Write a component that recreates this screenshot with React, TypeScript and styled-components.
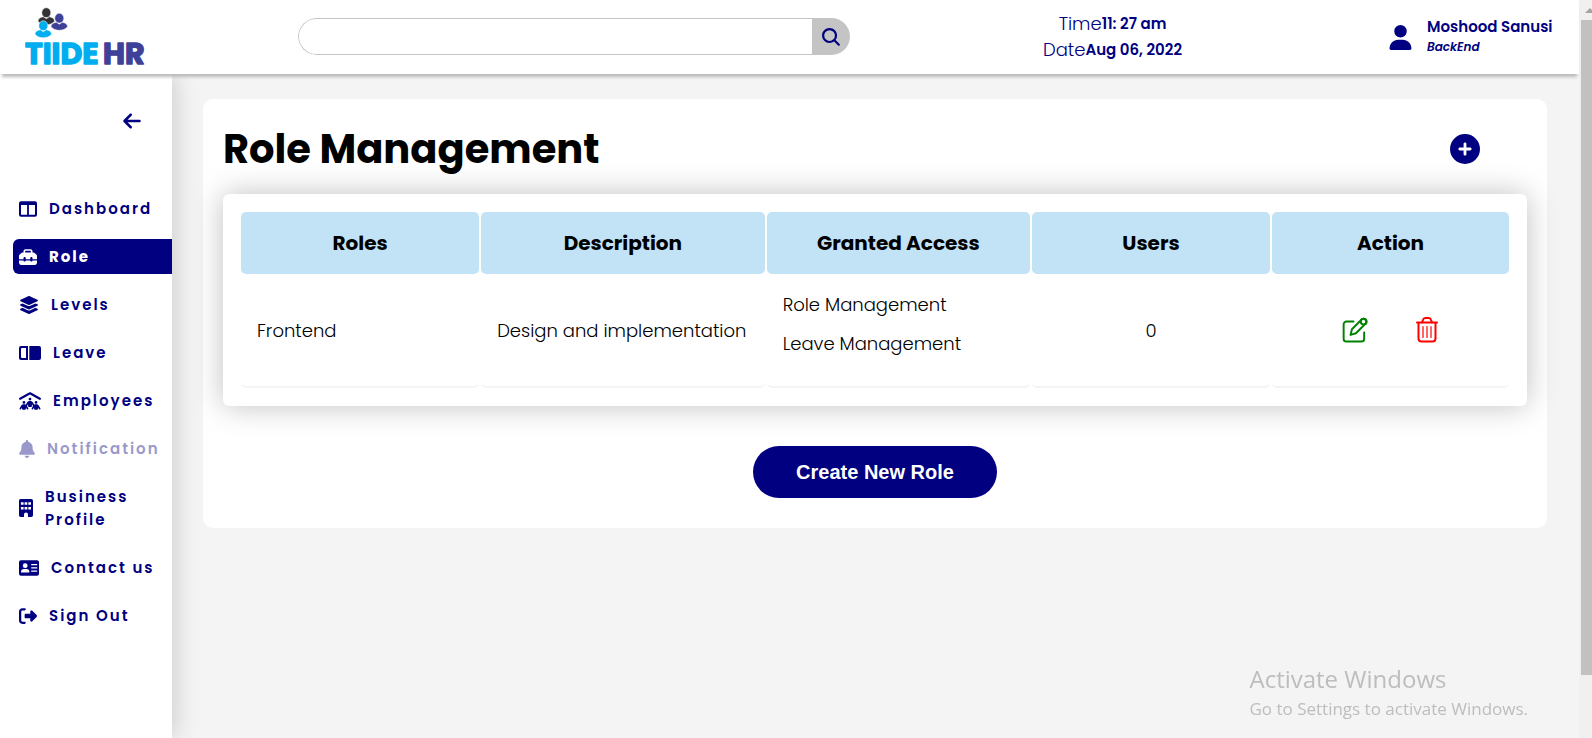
import React from "react";
import styled, { createGlobalStyle } from "styled-components";
import {
  FaArrowLeft,
  FaBell,
  FaCirclePlus,
  FaLayerGroup,
  FaPeopleRoof,
  FaRightFromBracket,
  FaToolbox,
  FaUser,
} from "react-icons/fa6";
import { IoSearch } from "react-icons/io5";

const navy = "#000080";
const brandBlue = "#00aeef";
const brandIndigo = "#3f4199";

const GlobalStyle = createGlobalStyle`
  *, *::before, *::after { box-sizing: border-box; }
  body {
    margin: 0;
    background: #f4f4f4;
    color: #000;
    font-family: Poppins, Inter, "Liberation Sans", sans-serif;
  }
  h1, p, ul { margin: 0; padding: 0; }
  ul { list-style: none; }
  button { border: 0; padding: 0; background: none; cursor: pointer; }
`;

const Shell = styled.div`
  display: grid;
  grid-template-columns: minmax(0, 1fr) 13px;
  min-height: 100vh;
`;

const Page = styled.div`
  display: flex;
  flex-direction: column;
  min-width: 0;
`;

const Header = styled.header`
  position: relative;
  z-index: 2;
  display: flex;
  align-items: center;
  height: 74px;
  padding: 0 0 1px 25px;
  background: #fff;
  box-shadow: 0 5px 3px -2px #bbb;
  color: ${navy};
`;

const Logo = styled.a`
  flex: 0 0 273px;
  line-height: 0;
`;

const LogoArt = styled.svg`
  width: 124px;
  height: 73px;
  font-size: 30px;
  font-weight: 700;
`;

const SearchForm = styled.form`
  display: flex;
  flex: 0 1 552px;
  height: 37px;
  border-radius: 19px;
  overflow: hidden;
`;

const SearchInput = styled.input`
  flex: 1;
  min-width: 0;
  padding: 0 16px;
  border: 1px solid #c4c4c4;
  border-right: 0;
  border-radius: 19px 0 0 19px;
  outline: 0;
  font: inherit;
`;

const SearchButton = styled.button`
  display: flex;
  align-items: center;
  justify-content: center;
  width: 38px;
  background: #c4c4c4;
  color: ${navy};
`;

const Clock = styled.div`
  flex: 1;
  text-align: center;
  font-size: 18px;
  font-weight: 300;
  line-height: 26px;

  strong {
    font-size: 15px;
    font-weight: 600;
    vertical-align: 1px;
  }
`;

const Account = styled.div`
  display: flex;
  align-items: center;
  gap: 14px;
  flex: 0 0 204px;
  padding: 1px 0 0 13px;
`;

const AccountName = styled.p`
  font-size: 15px;
  font-weight: 600;
  line-height: 20px;
`;

const AccountTeam = styled.p`
  font-size: 12px;
  font-style: italic;
  font-weight: 600;
  line-height: 20px;
`;

const Body = styled.div`
  display: flex;
  flex: 1;
`;

const Sidebar = styled.aside`
  position: relative;
  flex: 0 0 172px;
  padding-left: 13px;
  background: #fff;
  box-shadow: 0 0 26px rgba(0, 0, 0, 0.2);
`;

const CollapseButton = styled.button`
  display: block;
  height: 20px;
  margin: 37px 30px 60px auto;
  color: ${navy};
  line-height: 0;
`;

const NavList = styled.ul`
  display: flex;
  flex-direction: column;
  gap: 13px;
`;

const NavLink = styled.a<{ $iconWidth: number; $active?: boolean; $muted?: boolean }>`
  display: flex;
  align-items: center;
  gap: 12px;
  padding: 6px 0 6px 6px;
  border-radius: 6px 0 0 6px;
  background: ${(p) => (p.$active ? navy : "transparent")};
  color: ${(p) => (p.$active ? "#fff" : navy)};
  opacity: ${(p) => (p.$muted ? 0.4 : 1)};
  font-size: 15px;
  font-weight: ${(p) => (p.$active ? 700 : 600)};
  letter-spacing: 2px;
  line-height: 23px;
  text-decoration: none;

  svg {
    flex: none;
    width: ${(p) => p.$iconWidth}px;
    height: 18px;
  }
`;

const Main = styled.main`
  flex: 1;
  min-width: 0;
  padding: 25px 32px 25px 31px;
`;

const Panel = styled.section`
  display: flex;
  flex-direction: column;
  padding: 20px 20px 30px;
  border-radius: 10px;
  background: #fff;
`;

const TitleRow = styled.div`
  display: flex;
  align-items: center;
  justify-content: space-between;
  padding-right: 47px;
  margin-bottom: 15px;
`;

const Title = styled.h1`
  font-size: 40px;
  font-weight: 700;
  line-height: 60px;
`;

const IconButton = styled.button<{ $color: string; $size: number }>`
  color: ${(p) => p.$color};
  font-size: ${(p) => p.$size}px;
  line-height: 0;
`;

const TableCard = styled.div`
  padding: 16px;
  border-radius: 6px;
  background: #fff;
  box-shadow: 0 0 30px rgba(0, 0, 0, 0.25);
`;

const RoleTable = styled.table`
  width: 100%;
  border-spacing: 2px;
  table-layout: fixed;
`;

const HeadCell = styled.th<{ $width: string }>`
  width: ${(p) => p.$width};
  height: 62px;
  padding: 0 16px;
  border-radius: 5px;
  background: #c2e2f5;
  font-size: 20px;
  font-weight: 700;
`;

const Cell = styled.td<{ $center?: boolean }>`
  padding: 15px 16px 17px;
  border-bottom: 2px solid #f4f4f4;
  border-radius: 5px;
  font-size: 18px;
  font-weight: 300;
  line-height: 27px;
  text-align: ${(p) => (p.$center ? "center" : "left")};
`;

const AccessItem = styled.li`
  margin-bottom: 12px;
`;

const Actions = styled.div`
  display: flex;
  justify-content: center;
  gap: 46px;
`;

const CreateButton = styled.button`
  align-self: center;
  height: 52px;
  margin-top: 40px;
  padding: 0 43px;
  border-radius: 26px;
  background: ${navy};
  color: #fff;
  font-family: Arial, "Liberation Sans", sans-serif;
  font-size: 20px;
  font-weight: 700;
`;

const Watermark = styled.div`
  position: fixed;
  right: 64px;
  bottom: 15px;
  color: #bdbdbd;
  font-family: "Segoe UI", "Open Sans", sans-serif;
  font-size: 17px;
  line-height: 28px;
  pointer-events: none;
`;

const WatermarkTitle = styled.p`
  font-size: 24px;
  line-height: 32px;
`;

const ScrollTrack = styled.div`
  display: flex;
  flex-direction: column;
  height: 100vh;
  padding-left: 2px;
  background: #f0f0f0;
  overflow: hidden;
`;

const ScrollArrow = styled.svg`
  flex: none;
  width: 15px;
  height: 20px;
`;

const ScrollThumb = styled.div`
  height: 88.8%;
  background: #c1c1c1;
`;

function DashboardIcon() {
  return (
    <svg viewBox="0 0 18 18" fill="currentColor" aria-hidden="true">
      <path
        fillRule="evenodd"
        d="M2 1.300h14a2 2 0 0 1 2 2v11.400a2 2 0 0 1-2 2H2a2 2 0 0 1-2-2V3.300a2 2 0 0 1 2-2ZM2 5v9.200a.6.6 0 0 0 .6.6H8.100V5Zm7.900 0v9.800h5.500a.6.6 0 0 0 .6-.6V5Z"
      />
    </svg>
  );
}

function LeaveIcon() {
  return (
    <svg viewBox="0 0 22 18" fill="currentColor" aria-hidden="true">
      <path
        fillRule="evenodd"
        d="M2 2h7v14H2a2 2 0 0 1-2-2V4a2 2 0 0 1 2-2Zm1 2a1 1 0 0 0-1 1v8a1 1 0 0 0 1 1h4V4Z"
      />
      <path d="M10.300 2H20a2 2 0 0 1 2 2v10a2 2 0 0 1-2 2h-9.700Z" />
    </svg>
  );
}

function BuildingIcon() {
  return (
    <svg viewBox="0 0 14 18" fill="currentColor" aria-hidden="true">
      <path
        fillRule="evenodd"
        d="M1.700 0h10.600A1.700 1.700 0 0 1 14 1.700v14.600a1.700 1.700 0 0 1-1.700 1.700H9v-2.600a2 2 0 0 0-4 0V18H1.700A1.700 1.700 0 0 1 0 16.300V1.700A1.700 1.700 0 0 1 1.700 0ZM1.900 3.200v2.600h2.700V3.200Zm3.700 0v2.600h2.700V3.200Zm3.700 0v2.600h2.700V3.200ZM1.900 7.900v2.600h2.700V7.900Zm3.700 0v2.600h2.700V7.900Zm3.700 0v2.600h2.700V7.900Z"
      />
    </svg>
  );
}

function ContactIcon() {
  return (
    <svg viewBox="0 0 20 18" fill="currentColor" aria-hidden="true">
      <path
        fillRule="evenodd"
        d="M2 1.200h16a2 2 0 0 1 2 2v11.600a2 2 0 0 1-2 2H2a2 2 0 0 1-2-2V3.200a2 2 0 0 1 2-2ZM6.200 4.300a2.400 2.400 0 1 0 0 4.800 2.400 2.400 0 0 0 0-4.800ZM5 10a3 3 0 0 0-3 3c0 .4.200.6.600.600h7.200c.4 0 .6-.2.600-.6a3 3 0 0 0-3-3Zm7.200-4.900v1.200h6V5.100Zm0 3.200v1.200h6V8.300Zm0 3.200v1.200h6v-1.200Z"
      />
    </svg>
  );
}

function EditIcon() {
  return (
    <svg
      viewBox="0 0 26 27"
      width="1em"
      height="1em"
      fill="none"
      stroke="currentColor"
      strokeWidth="2"
      strokeLinecap="round"
      strokeLinejoin="round"
      aria-hidden="true"
    >
      <path d="M11.500 4.700H4.200a3 3 0 0 0-3 3V22.500a3 3 0 0 0 3 3h15.300a3 3 0 0 0 3-3V16" />
      <path d="M8.400 18.600 9.800 12.700 19.900 2.600A3 3 0 0 1 24.100 6.800L14 16.900Z" />
      <circle cx="22" cy="4.700" r="3" />
    </svg>
  );
}

function TrashIcon() {
  return (
    <svg
      viewBox="0 0 26 26"
      width="1em"
      height="1em"
      fill="none"
      stroke="currentColor"
      strokeWidth="2"
      strokeLinecap="round"
      strokeLinejoin="round"
      aria-hidden="true"
    >
      <path d="M3 5.500h20M4.500 5.500V21.500a3 3 0 0 0 3 3h11a3 3 0 0 0 3-3V5.500" />
      <path d="M8 5.500 9 2.800A2.500 2.500 0 0 1 11.300 1h3.400A2.500 2.500 0 0 1 17 2.800l1 2.700" />
      <path strokeWidth="1.200" d="M9 9.500v11M13 9.500v11M17 9.500v11" />
    </svg>
  );
}

function Person({ x, y, color }: { x: number; y: number; color: string }) {
  return (
    <g transform={`translate(${x} ${y})`} fill={color} stroke="#fff" strokeWidth="0.5">
      <path d="M0 13.200C0 10.400 3 9.200 5.400 8.800l2.900 1.900 2.900-1.900c2.400.4 5.400 1.600 5.400 4.400-2 2.400-5 3.600-8.300 3.600S2 15.600 0 13.200Z" />
      <ellipse cx="8.300" cy="4.700" rx="4.500" ry="4.900" />
    </g>
  );
}

const navItems = [
  { label: "Dashboard", icon: <DashboardIcon />, width: 18 },
  { label: "Role", icon: <FaToolbox />, width: 18, active: true },
  { label: "Levels", icon: <FaLayerGroup />, width: 20 },
  { label: "Leave", icon: <LeaveIcon />, width: 22 },
  { label: "Employees", icon: <FaPeopleRoof />, width: 22 },
  { label: "Notification", icon: <FaBell />, width: 16, muted: true },
  { label: "Business Profile", icon: <BuildingIcon />, width: 14 },
  { label: "Contact us", icon: <ContactIcon />, width: 20 },
  { label: "Sign Out", icon: <FaRightFromBracket />, width: 18 },
];

const columns = [
  { label: "Roles", width: "18.9%" },
  { label: "Description", width: "22.5%" },
  { label: "Granted Access", width: "20.9%" },
  { label: "Users", width: "18.9%" },
  { label: "Action", width: "18.8%" },
];

const roles = [
  {
    name: "Frontend",
    description: "Design and implementation",
    access: ["Role Management", "Leave Management"],
    users: 0,
  },
];

export default function App() {
  return (
    <>
      <GlobalStyle />
      <Shell>
        <Page>
          <Header>
            <Logo href="#" aria-label="TIIDE HR">
              <LogoArt viewBox="0 0 124 73">
                <Person x={13} y={8} color="#333" />
                <Person x={26} y={13.5} color={brandIndigo} />
                <Person x={10} y={21} color={brandBlue} />
                <g strokeWidth="1.4" strokeLinejoin="round">
                  <text x="0" y="64" fill={brandBlue} stroke={brandBlue}>
                    TIIDE
                  </text>
                  <text x="78" y="64" fill={brandIndigo} stroke={brandIndigo}>
                    HR
                  </text>
                </g>
              </LogoArt>
            </Logo>
            <SearchForm role="search" onSubmit={(e) => e.preventDefault()}>
              <SearchInput type="search" aria-label="Search" />
              <SearchButton type="submit" aria-label="Search">
                <IoSearch size={22} />
              </SearchButton>
            </SearchForm>
            <Clock>
              <p>
                Time<strong>11: 27 am</strong>
              </p>
              <p>
                Date<strong>Aug 06, 2022</strong>
              </p>
            </Clock>
            <Account>
              <FaUser size={25} />
              <div>
                <AccountName>Moshood Sanusi</AccountName>
                <AccountTeam>BackEnd</AccountTeam>
              </div>
            </Account>
          </Header>
          <Body>
            <Sidebar>
              <CollapseButton type="button" aria-label="Collapse menu">
                <FaArrowLeft size={20} />
              </CollapseButton>
              <nav>
                <NavList>
                  {navItems.map((item) => (
                    <li key={item.label}>
                      <NavLink
                        href="#"
                        $iconWidth={item.width}
                        $active={item.active}
                        $muted={item.muted}
                      >
                        {item.icon}
                        <span>{item.label}</span>
                      </NavLink>
                    </li>
                  ))}
                </NavList>
              </nav>
            </Sidebar>
            <Main>
              <Panel>
                <TitleRow>
                  <Title>Role Management</Title>
                  <IconButton type="button" aria-label="Add role" $color={navy} $size={30}>
                    <FaCirclePlus />
                  </IconButton>
                </TitleRow>
                <TableCard>
                  <RoleTable>
                    <thead>
                      <tr>
                        {columns.map((c) => (
                          <HeadCell key={c.label} scope="col" $width={c.width}>
                            {c.label}
                          </HeadCell>
                        ))}
                      </tr>
                    </thead>
                    <tbody>
                      {roles.map((role) => (
                        <tr key={role.name}>
                          <Cell>{role.name}</Cell>
                          <Cell>{role.description}</Cell>
                          <Cell>
                            <ul>
                              {role.access.map((a) => (
                                <AccessItem key={a}>{a}</AccessItem>
                              ))}
                            </ul>
                          </Cell>
                          <Cell $center>{role.users}</Cell>
                          <Cell>
                            <Actions>
                              <IconButton type="button" aria-label="Edit role" $color="green" $size={26}>
                                <EditIcon />
                              </IconButton>
                              <IconButton type="button" aria-label="Delete role" $color="red" $size={26}>
                                <TrashIcon />
                              </IconButton>
                            </Actions>
                          </Cell>
                        </tr>
                      ))}
                    </tbody>
                  </RoleTable>
                </TableCard>
                <CreateButton type="button">Create New Role</CreateButton>
              </Panel>
            </Main>
          </Body>
        </Page>
        <ScrollTrack aria-hidden="true">
          <ScrollArrow viewBox="0 0 15 20">
            <path d="M4 13l5-5 5 5Z" fill="#a3a3a3" />
          </ScrollArrow>
          <ScrollThumb />
        </ScrollTrack>
      </Shell>
      <Watermark>
        <WatermarkTitle>Activate Windows</WatermarkTitle>
        <p>Go to Settings to activate Windows.</p>
      </Watermark>
    </>
  );
}
